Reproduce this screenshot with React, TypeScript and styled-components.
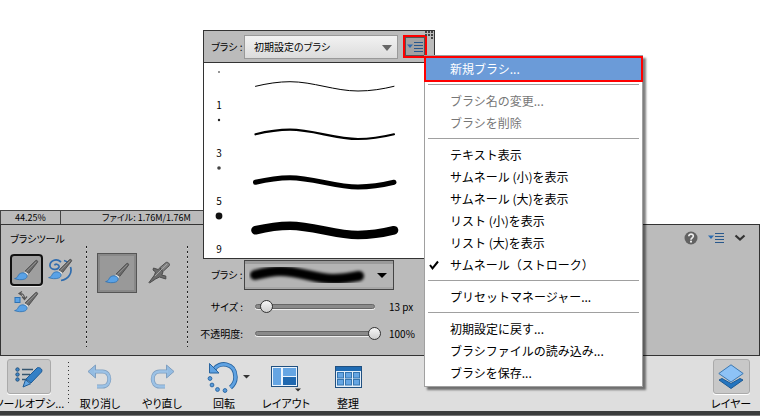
import React from 'react';
import styled, { createGlobalStyle, css } from 'styled-components';

const GlobalStyle = createGlobalStyle`
  * { box-sizing: border-box; }
  body { margin: 0; background: #fff; overflow: hidden; }
  body, button, select, input {
    font-family: "Noto Sans CJK JP", "Liberation Sans", sans-serif;
    font-size: 10px;
    line-height: 16px;
    color: #000;
  }
`;

const Page = styled.div`
  display: flex;
  flex-direction: column;
  min-height: 100vh;
  font-feature-settings: "palt";
`;

const Canvas = styled.main`
  flex: 1;
  background: #fff;
`;

const StatusBar = styled.div`
  display: flex;
  width: 60%;
  height: 14px;
  border: 1px solid #444;
  border-bottom: 0;
  background: #bbb;
  font-size: 9px;
  line-height: 13px;
`;

const Zoom = styled.span`
  width: 60px;
  text-align: center;
  border-right: 1px solid #444;
`;

const FileInfo = styled.span`
  padding-left: 41px;
`;

const Panel = styled.section`
  display: flex;
  align-items: flex-start;
  border: 1px solid #333;
  background: #bbb;
`;

const ToolGroup = styled.div`
  width: 85px;
  padding: 6px 0 0 9px;
`;

const Title = styled.h2`
  margin: 0 0 7px;
  font-size: 10px;
  font-weight: 400;
  line-height: 16px;
`;

const ToolGrid = styled.div`
  display: grid;
  grid-template-columns: 33px 30px;
  column-gap: 2px;
`;

const ToolButton = styled.button<{ $active?: boolean }>`
  display: grid;
  place-items: center;
  height: 32px;
  padding: 0;
  border: 2px solid ${p => (p.$active ? '#111' : 'transparent')};
  border-radius: 4px;
  background: ${p => (p.$active ? '#9f9f9f' : 'transparent')};
  box-shadow: ${p => (p.$active ? '0 1px 0 #e4e4e4' : 'none')};
`;

const dotted = css`
  width: 1px;
  background: repeating-linear-gradient(#222 0 2px, #d8d8d8 2px 3px, transparent 3px 5px);
`;

const Divider = styled.div`
  ${dotted}
  align-self: stretch;
  margin: 21px 0 8px;
`;

const ModeGroup = styled.div`
  display: flex;
  align-items: center;
  width: 100px;
  padding: 28px 0 0 10px;
  gap: 2px;
`;

const ModeButton = styled.button<{ $active?: boolean }>`
  display: grid;
  place-items: center;
  width: 40px;
  height: 40px;
  padding: 0;
  border: ${p => (p.$active ? '1px solid #555' : '0')};
  background: ${p => (p.$active ? '#999' : 'transparent')};
  box-shadow: ${p => (p.$active ? 'inset 0 0 0 2px #888' : 'none')};
`;

const Settings = styled.div`
  width: 215px;
  margin-left: 15px;
  padding: 35px 0 8px;
`;

const BrushRow = styled.div`
  position: relative;
  display: flex;
  align-items: center;
  height: 30px;
  margin-bottom: 3px;
  padding-left: 8px;
`;

const FieldLabel = styled.label`
  width: 33px;
  white-space: nowrap;
`;

const StrokeField = styled.button`
  display: flex;
  align-items: center;
  justify-content: space-between;
  width: 150px;
  height: 30px;
  padding: 0 6px 0 4px;
  border: 1px solid #444;
  background: #b4b4b4;
  box-shadow: inset 0 3px 0 #9a9a9a, inset 0 -2px 0 #a6a6a6;
`;

const SliderRow = styled.div`
  display: grid;
  grid-template-columns: 40px 120px 1fr;
  align-items: center;
  column-gap: 12px;
  height: 27px;
`;

const SliderLabel = styled.label`
  display: flex;
  justify-content: flex-end;
  white-space: nowrap;
`;

const Track = styled.span`
  display: flex;
  align-items: center;
  height: 5px;
  border: 1px solid #666;
  border-radius: 3px;
  background: #8a8a8a;
  box-shadow: 0 1px 0 #eee;
`;

const Range = styled.input`
  flex: none;
  appearance: none;
  width: calc(100% + 14px);
  height: 14px;
  margin: 0 -7px;
  background: transparent;
  &::-webkit-slider-thumb {
    appearance: none;
    width: 13px;
    height: 13px;
    border: 1px solid #333;
    border-radius: 50%;
    background: linear-gradient(#f6f6f6, #cfcfcf);
  }
`;

const Output = styled.output`
  padding-left: 2px;
`;

const PanelActions = styled.div`
  display: flex;
  align-items: center;
  gap: 10px;
  margin-left: auto;
  padding: 6px 13px 0 0;
`;

const IconButton = styled.button`
  display: grid;
  padding: 0;
  border: 0;
  background: transparent;
`;

const Popup = styled.div`
  position: absolute;
  left: 0;
  bottom: calc(100% + 1px);
  width: 232px;
  border: 1px solid #333;
  background: #fff;
`;

const PopupHeader = styled.div`
  position: relative;
  display: flex;
  align-items: center;
  height: 32px;
  padding-left: 7px;
  border-bottom: 1px solid #333;
  background: #bbb;
`;

const Grip = styled.svg`
  position: absolute;
  top: 0;
  right: 0;
`;

const SelectBox = styled.span`
  position: relative;
  display: flex;
  width: 154px;
  margin-right: 7px;
`;

const PresetSelect = styled.select`
  appearance: none;
  width: 100%;
  height: 24px;
  padding: 0 24px 0 9px;
  border: 1px solid #999;
  border-radius: 0;
  background: linear-gradient(#f2f2f2, #dcdcdc);
  font-feature-settings: "palt";
`;

const SelectArrow = styled.svg`
  position: absolute;
  right: 6px;
  top: 10px;
  pointer-events: none;
`;

const MenuAnchor = styled.div`
  position: relative;
  outline: 2px solid #f00;
`;

const MenuButton = styled.button`
  display: grid;
  place-items: center;
  width: 20px;
  height: 19px;
  padding: 0;
  border: 1px solid #555;
  background: #a2a2a2;
`;

const BrushList = styled.ul`
  margin: 0;
  padding: 0 0 3px;
  list-style: none;
`;

const BrushItem = styled.li`
  display: grid;
  grid-template-columns: 30px 150px;
  column-gap: 17px;
  height: 48px;
`;

const Thumb = styled.div`
  display: grid;
  grid-template-rows: 18px 16px;
  row-gap: 16px;
  justify-items: center;
  align-items: center;
`;

const Stroke = styled.svg`
  margin-top: 11px;
`;

const Menu = styled.div`
  position: absolute;
  z-index: 2;
  top: calc(100% - 1px);
  left: 19px;
  min-width: 219px;
  padding: 2px 1px;
  border: 1px solid #a0a0a0;
  background: #fff;
  box-shadow: 3px 3px 2px rgba(0, 0, 0, 0.5);
  font-feature-settings: normal;
`;

const MenuItem = styled.button<{ $marked?: boolean }>`
  display: flex;
  align-items: center;
  width: 100%;
  height: 22px;
  padding: 0 24px 0 0;
  border: 0;
  background: ${p => (p.$marked ? '#6b9bd8' : 'transparent')};
  color: ${p => (p.$marked ? '#fff' : '#000')};
  box-shadow: ${p => (p.$marked ? '0 0 0 1px #fff' : 'none')};
  outline: ${p => (p.$marked ? '2px solid #f00' : 'none')};
  font-size: 12px;
  line-height: 22px;
  white-space: nowrap;
  &:disabled { color: #777; }
`;

const Check = styled.span`
  display: grid;
  place-items: center;
  width: 16px;
  margin-right: 8px;
`;

const Separator = styled.hr`
  height: 1px;
  margin: 4px 2px 5px;
  border: 0;
  background: #a0a0a0;
`;

const Taskbar = styled.nav`
  display: flex;
  height: 55px;
  overflow: hidden;
  background: #dedede;
`;

const Task = styled.button<{ $wide?: boolean }>`
  display: flex;
  flex: none;
  flex-direction: column;
  align-items: center;
  width: ${p => (p.$wide ? '58px' : '62px')};
  padding: 3px 0 0;
  border: 0;
  background: transparent;
  font-size: 11px;
  line-height: 16px;
  font-feature-settings: "palt";
  white-space: nowrap;
`;

const TaskIcon = styled.span<{ $framed?: 'wide' | 'narrow' }>`
  display: grid;
  place-items: center;
  width: ${p => (p.$framed === 'narrow' ? '37px' : '44px')};
  height: 36px;
  margin-bottom: 1px;
  border: 1px solid ${p => (p.$framed ? '#aaa' : 'transparent')};
  border-radius: 3px;
  background: ${p => (p.$framed ? '#c8c8c8' : 'transparent')};
  box-shadow: ${p => (p.$framed ? '0 1px 0 #fff' : 'none')};
`;

const TaskLabel = styled.span`
  flex: none;
`;

const TaskDivider = styled.div`
  width: 1px;
  margin: 6px 0 6px 10px;
  background: repeating-linear-gradient(#333 0 1px, transparent 1px 4px);
`;

const Spacer = styled.div`
  flex: 1;
`;

const BottomEdge = styled.div`
  height: 5px;
  border-top: 4px solid #3b3c3c;
  background: #777;
`;

const BrushShape = () => (
  <>
    <path d="M21.500 1.700c1-1 2.700.3 2 1.500l-9 11.500-3.500-2.600z" fill="#6b6b6b" stroke="#444" strokeWidth=".8" />
    <path d="m22.200 2.800-9.800 9.600" stroke="#999" strokeWidth=".8" />
    <path d="m11.200 12.400 3.300 2.400-1.300 1.400-3.200-2.500z" fill="#ddd" />
    <path d="M.6 19.600c2.600-.3 2.900-1.900 3.900-3.600 1.400-2.400 5.300-2.900 7.500-1 2 1.700 1 4.200-1.400 5.100-3 1-7 .7-10-.5z" fill="#5aa2e6" stroke="#2d72b4" strokeWidth=".8" />
  </>
);

const BrushIcon = () => (
  <svg width="25" height="23" viewBox="0 0 25 23" fill="none"><BrushShape /></svg>
);

const HistoryBrushIcon = () => (
  <svg width="25" height="25" viewBox="0 0 25 25" fill="none">
    <path d="M13 4C8-.500 1.500 3 2 8c.500 4 8 4.500 9 1 .500-2.500-3.500-3.800-4.500-1.600M16 2.500c2 .5 3 1.200 4 2.200M22.500 9c2 6-2 12-9.500 13.500" stroke="#2f6cae" strokeWidth="1.700" />
    <BrushShape />
  </svg>
);

const ReplaceBrushIcon = () => (
  <svg width="25" height="23" viewBox="0 0 25 23" fill="none">
    <rect x="1" y="6.500" width="5" height="5" fill="#5aa2e6" stroke="#2d72b4" />
    <path d="M6 2.500c3 0 4.500 1.500 4.500 5M8 .5l-3 2 3 2M8 5.500l2.500 3 2.500-3" stroke="#555" strokeWidth="1.200" />
    <BrushShape />
  </svg>
);

const AirbrushIcon = () => (
  <svg width="24" height="24" viewBox="0 0 24 24" fill="none">
    <path d="M19 1.500c1.500-1 4.500 1.500 3.200 3.200L16.500 10l-3.800-3.200z" fill="#828282" stroke="#4c4c4c" />
    <path d="M12.500 7.500 16 10.800l-1.200 3.400 4 .8v3l-6.300-2L8.500 18l-6 4-.5-.500 5.500-7.500 1-3-2.500-2 .5-2 4.500 1.500z" fill="#6b6b6b" stroke="#4c4c4c" />
    <path d="m8 15 12-12" stroke="#a5a5a5" />
  </svg>
);

const ListIcon = () => (
  <svg width="16" height="12" viewBox="0 0 16 12">
    <path d="M0 3.500h6L3 7z" fill="#2d6cb0" />
    <path d="M7 1.500h9M7 4.500h9M7 7.500h9M7 10.500h9" stroke="#28588c" />
  </svg>
);

const HelpIcon = () => (
  <svg width="14" height="14" viewBox="0 0 14 14" fill="none">
    <circle cx="7" cy="7" r="6.500" fill="#626262" />
    <path d="M4.800 5.300C4.800 2.500 9.500 2.500 9.300 5.300 9.200 6.800 7 7 7 8.800" stroke="#eee" strokeWidth="1.700" />
    <rect x="6" y="9.700" width="2" height="1.800" fill="#eee" />
  </svg>
);

const Triangle = ({ w, h, fill = '#333' }: { w: number; h: number; fill?: string }) => (
  <svg width={w} height={h} viewBox="0 0 10 5" preserveAspectRatio="none"><path d="M0 0h10L5 5z" fill={fill} /></svg>
);

const wave = 'M4.500 12.300C16 9.500 28 7.700 39 7.700 62 7.700 84 17 107 17c13 0 25-2 36-4.700';

const brushes = [
  { size: 1, width: 1, dot: 0.8, fill: '#111' },
  { size: 3, width: 2.2, dot: 1.2, fill: '#222' },
  { size: 5, width: 5, dot: 1.8, fill: '#444' },
  { size: 9, width: 8.6, dot: 3.4, fill: '#111' },
];

type Entry = { text: string; disabled?: boolean; checked?: boolean; marked?: boolean };

const menuGroups: Entry[][] = [
  [{ text: '新規ブラシ...', marked: true }],
  [{ text: 'ブラシ名の変更...', disabled: true }, { text: 'ブラシを削除', disabled: true }],
  [
    { text: 'テキスト表示' },
    { text: 'サムネール (小)を表示' },
    { text: 'サムネール (大)を表示' },
    { text: 'リスト (小)を表示' },
    { text: 'リスト (大)を表示' },
    { text: 'サムネール（ストローク）', checked: true },
  ],
  [{ text: 'プリセットマネージャー...' }],
  [{ text: '初期設定に戻す...' }, { text: 'ブラシファイルの読み込み...' }, { text: 'ブラシを保存...' }],
];

const BrushMenu = () => (
  <Menu role="menu">
    {menuGroups.map((group, i) => (
      <React.Fragment key={i}>
        {i > 0 && <Separator />}
        {group.map(item => (
          <MenuItem key={item.text} role="menuitem" disabled={item.disabled} $marked={item.marked}>
            <Check>
              {item.checked && (
                <svg width="10" height="10" viewBox="0 0 10 10" fill="none">
                  <path d="m1 5 2.500 3.300L9 1.500" stroke="#000" strokeWidth="2" />
                </svg>
              )}
            </Check>
            {item.text}
          </MenuItem>
        ))}
      </React.Fragment>
    ))}
  </Menu>
);

const BrushPopup = () => (
  <Popup>
    <PopupHeader>
      <FieldLabel htmlFor="preset">ブラシ :</FieldLabel>
      <SelectBox>
        <PresetSelect id="preset"><option>初期設定のブラシ</option></PresetSelect>
        <SelectArrow width="10" height="6" viewBox="0 0 10 6"><path d="M0 0h10L5 6z" fill="#666" /></SelectArrow>
      </SelectBox>
      <MenuAnchor>
        <MenuButton aria-label="ブラシメニュー"><ListIcon /></MenuButton>
        <BrushMenu />
      </MenuAnchor>
      <Grip width="9" height="9" viewBox="0 0 9 9">
        <path d="M0 1h9M0 4h9M6 7h3" stroke="#444" strokeWidth="2" strokeDasharray="2 1" />
      </Grip>
    </PopupHeader>
    <BrushList>
      {brushes.map(b => (
        <BrushItem key={b.size}>
          <Thumb>
            <svg width="10" height="10" viewBox="0 0 10 10"><circle cx="5" cy="5" r={b.dot} fill={b.fill} /></svg>
            <span>{b.size}</span>
          </Thumb>
          <Stroke width="150" height="24" viewBox="0 0 150 24" fill="none">
            <path d={wave} stroke="#000" strokeWidth={b.width} strokeLinecap="round" />
          </Stroke>
        </BrushItem>
      ))}
    </BrushList>
  </Popup>
);

const OptionsIcon = () => (
  <svg width="28" height="24" viewBox="0 0 28 24" fill="none">
    <path d="M7 4.500h11M7 9.500h8M7 14.500h4" stroke="#35556f" strokeWidth="1.500" />
    <circle cx="2.500" cy="4.500" r="1.700" fill="#3c86cc" stroke="#27537c" />
    <circle cx="2.500" cy="9.500" r="1.700" fill="#3c86cc" stroke="#27537c" />
    <circle cx="2.500" cy="14.500" r="1.700" fill="#3c86cc" stroke="#27537c" />
    <path d="M22 3c1.500-1.500 6.500 1 4.500 4L16 18l-5-4z" fill="#3480c6" stroke="#205c96" />
    <path d="m10.500 14.700 5 4.100L8 22z" fill="#62a6e4" stroke="#205c96" />
  </svg>
);

const UndoIcon = ({ flip }: { flip?: boolean }) => (
  <svg width="26" height="26" viewBox="0 0 26 26" fill="none">
    <g transform={flip ? 'matrix(-1 0 0 1 26 0)' : undefined}>
      <path d="M7 7.500h8.500c9 0 9 15 0 15H10" stroke="#7f9fc0" strokeWidth="4" />
      <path d="M1 7.500 8.500 1v13z" fill="#94bce2" stroke="#7f9fc0" />
      <path d="M7 7.500h8.500c9 0 9 15 0 15H10" stroke="#9cc2e6" strokeWidth="2.600" />
    </g>
  </svg>
);

const RotateIcon = () => (
  <svg width="50" height="32" viewBox="1 0 50 32" fill="none">
    <path d="M12 8.500C17 .500 33 1 33.500 16c0 4.500-2 8-5 10.500" stroke="#28649f" strokeWidth="4.500" />
    <path d="M12 8.500C17 .500 33 1 33.500 16c0 4.500-2 8-5 10.500" stroke="#5fa2e2" strokeWidth="2.800" />
    <path d="M7.500 2.500v9.500h9.500z" fill="#5fa2e2" stroke="#28649f" />
    {[[8, 17.500], [10, 24], [15.500, 28.500], [23, 29.500]].map(([x, y]) => (
      <circle key={x} cx={x} cy={y} r="1.900" fill="#5b9cdb" stroke="#2f6ba6" />
    ))}
    <path d="M41 14h7l-3.500 3.500z" fill="#333" />
  </svg>
);

const LayoutIcon = () => (
  <svg width="30" height="30" viewBox="0 -4 30 30">
    <rect x=".5" y=".5" width="26" height="20" fill="#eaf3fc" stroke="#205080" />
    <rect x="2" y="2" width="8" height="17" fill="#65a5e3" />
    <rect x="12" y="2" width="13" height="8" fill="#65a5e3" />
    <rect x="12" y="11" width="13" height="8" fill="#1f68b0" />
    <path d="M24 22.500h6l-3 3z" fill="#333" />
  </svg>
);

const OrganizeIcon = () => (
  <svg width="27" height="22" viewBox="0 0 27 22">
    <rect x=".5" y=".5" width="26" height="21" fill="#e4effa" stroke="#205080" />
    <rect x="1" y="1" width="25" height="4" fill="#1f6bb3" />
    {[2, 10, 18].map(x => [6.5, 13.5].map(y => (
      <rect key={`${x}-${y}`} x={x + .5} y={y} width="6" height="5.500" fill="#65a5e3" stroke="#3574ae" />
    )))}
  </svg>
);

const LayersIcon = () => (
  <svg width="26" height="26" viewBox="0 0 26 26">
    <path d="m1 16 3-1.500 9 5 9-5 3 1.500-12 8.500z" fill="#2475c0" stroke="#1c5a94" />
    <path d="M13 .800 25.200 9.500 13 18 .800 9.500z" fill="#8dc2f6" stroke="#3c78b0" />
  </svg>
);

export default function App() {
  return (
    <Page>
      <GlobalStyle />
      <Canvas />
      <StatusBar>
        <Zoom>44.25%</Zoom>
        <FileInfo>ファイル: 1.76M/1.76M</FileInfo>
      </StatusBar>
      <Panel>
        <ToolGroup>
          <Title>ブラシツール</Title>
          <ToolGrid>
            <ToolButton $active aria-label="ブラシ"><BrushIcon /></ToolButton>
            <ToolButton aria-label="ヒストリーブラシ"><HistoryBrushIcon /></ToolButton>
            <ToolButton aria-label="色の置き換え"><ReplaceBrushIcon /></ToolButton>
          </ToolGrid>
        </ToolGroup>
        <Divider />
        <ModeGroup>
          <ModeButton $active aria-label="ブラシモード"><BrushIcon /></ModeButton>
          <ModeButton aria-label="エアブラシ"><AirbrushIcon /></ModeButton>
        </ModeGroup>
        <Divider />
        <Settings>
          <BrushRow>
            <FieldLabel htmlFor="stroke">ブラシ :</FieldLabel>
            <StrokeField id="stroke">
              <svg width="118" height="26" viewBox="0 0 118 26" fill="none">
                <defs><filter id="soft" x="-10%" y="-50%" width="120%" height="200%"><feGaussianBlur stdDeviation="1.400" /></filter></defs>
                <path d="M6 13C14 11 22 9 31 9 51 9 66 17 84 17c9 0 16-1 26-3" stroke="#000" strokeWidth="10" strokeLinecap="round" filter="url(#soft)" />
              </svg>
              <Triangle w={10} h={5} fill="#000" />
            </StrokeField>
            <BrushPopup />
          </BrushRow>
          <SliderRow>
            <SliderLabel htmlFor="size">サイズ :</SliderLabel>
            <Track><Range id="size" type="range" min={1} max={130} defaultValue={13} /></Track>
            <Output htmlFor="size">13 px</Output>
          </SliderRow>
          <SliderRow>
            <SliderLabel htmlFor="opacity">不透明度:</SliderLabel>
            <Track><Range id="opacity" type="range" min={0} max={100} defaultValue={100} /></Track>
            <Output htmlFor="opacity">100%</Output>
          </SliderRow>
        </Settings>
        <PanelActions>
          <IconButton aria-label="ヘルプ"><HelpIcon /></IconButton>
          <IconButton aria-label="パネルメニュー"><ListIcon /></IconButton>
          <IconButton aria-label="閉じる">
            <svg width="12" height="8" viewBox="0 0 12 8" fill="none">
              <path d="m1.500 1.500 4.500 4 4.500-4" stroke="#333" strokeWidth="2.200" />
            </svg>
          </IconButton>
        </PanelActions>
      </Panel>
      <Taskbar>
        <Task $wide><TaskIcon $framed="wide"><OptionsIcon /></TaskIcon><TaskLabel>ツールオプシ...</TaskLabel></Task>
        <TaskDivider />
        <Task><TaskIcon><UndoIcon /></TaskIcon><TaskLabel>取り消し</TaskLabel></Task>
        <Task><TaskIcon><UndoIcon flip /></TaskIcon><TaskLabel>やり直し</TaskLabel></Task>
        <Task><TaskIcon><RotateIcon /></TaskIcon><TaskLabel>回転</TaskLabel></Task>
        <Task><TaskIcon><LayoutIcon /></TaskIcon><TaskLabel>レイアウト</TaskLabel></Task>
        <Task><TaskIcon><OrganizeIcon /></TaskIcon><TaskLabel>整理</TaskLabel></Task>
        <Spacer />
        <Task $wide><TaskIcon $framed="narrow"><LayersIcon /></TaskIcon><TaskLabel>レイヤー</TaskLabel></Task>
      </Taskbar>
      <BottomEdge />
    </Page>
  );
}
